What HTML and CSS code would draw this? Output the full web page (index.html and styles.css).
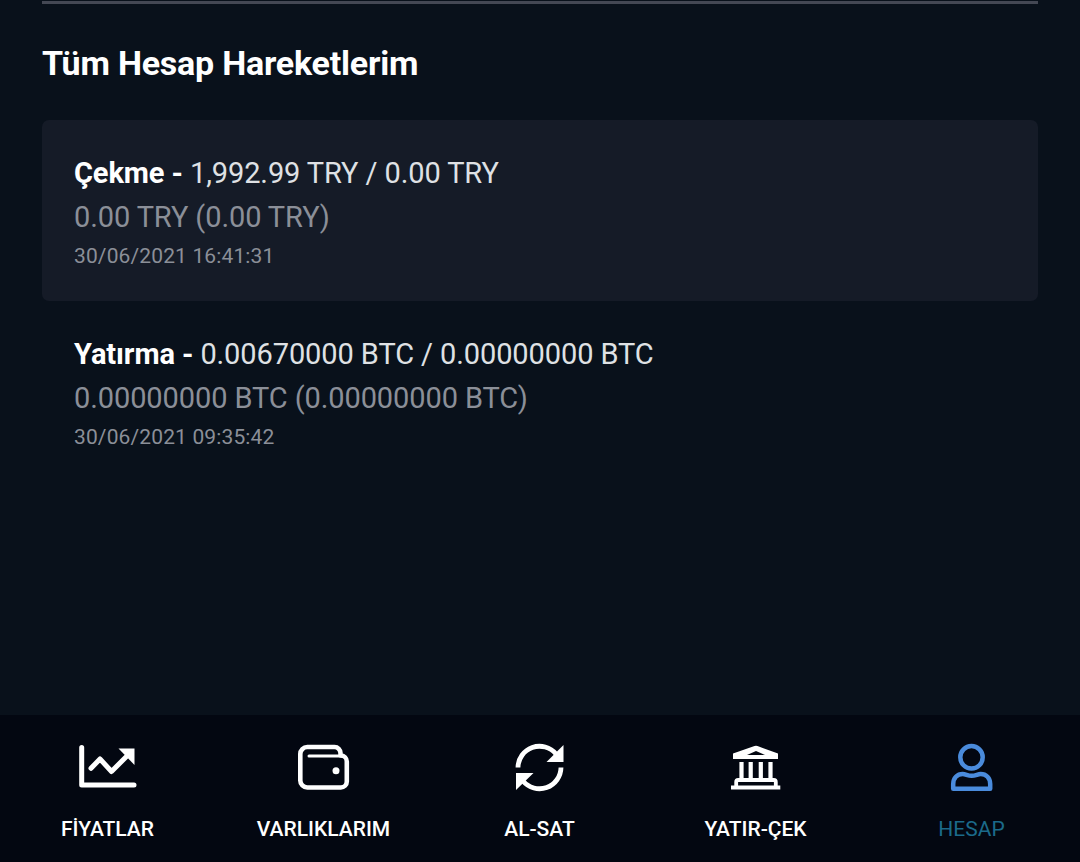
FILE: index.html
```html
<!DOCTYPE html>
<html lang="tr">
<head>
	<meta charset="UTF-8">
	<meta name="viewport" content="width=device-width, initial-scale=1.0">
	<title>Tüm Hesap Hareketlerim</title>
	<link rel="stylesheet" href="styles.css">
</head>
<body>
	<main class="content">
		<h1 class="title">Tüm Hesap Hareketlerim</h1>
		<ul class="list">
			<li class="item item-shaded">
				<p class="amount"><strong>Çekme - </strong>1,992.99 TRY / 0.00 TRY</p>
				<p class="balance">0.00 TRY (0.00 TRY)</p>
				<p class="date">30/06/2021 16:41:31</p>
			</li>
			<li class="item">
				<p class="amount"><strong>Yatırma - </strong>0.00670000 BTC / 0.00000000 BTC</p>
				<p class="balance">0.00000000 BTC (0.00000000 BTC)</p>
				<p class="date">30/06/2021 09:35:42</p>
			</li>
		</ul>
	</main>

	<nav class="tabs">
		<a class="tab">
			<svg class="icon" viewBox="0 0 64 56">
				<path d="M5.7 7.5V45H58" stroke-width="5"/>
				<path d="M15 28.3L24 19L35.5 31.5L50 17" stroke-width="5"/>
				<path class="solid" d="M42.5 8.5H58.5V25Z"/>
			</svg>
			<span>FİYATLAR</span>
		</a>
		<a class="tab">
			<svg class="icon" viewBox="0 0 64 56">
				<path d="M48.5 14.5V13a6 6 0 0 0-6-6H15.3a7 7 0 0 0-7 7V40.5a7 7 0 0 0 7 7H48.8a6 6 0 0 0 6-6V21.5a6 6 0 0 0-6-6" stroke-width="4.6"/>
				<path d="M17 16H50" stroke-width="3"/>
				<circle class="solid" cx="44" cy="30.7" r="3.5"/>
			</svg>
			<span>VARLIKLARIM</span>
		</a>
		<a class="tab">
			<svg class="icon" viewBox="0 0 64 56">
				<path class="flat" d="M10 27.5A21.5 21.5 0 0 1 48 14M53 27.5A21.5 21.5 0 0 1 15 41" stroke-width="4.8"/>
				<path class="solid" d="M55.5 5V22H38.5ZM8 33H25.5L8 50Z"/>
			</svg>
			<span>AL-SAT</span>
		</a>
		<a class="tab">
			<svg class="icon" viewBox="0 0 64 56">
				<path class="solid" fill-rule="evenodd" d="M9 13.5L30.5 6Q32 5.4 33.5 6L54 13.5V19H9ZM23 15H41L32 11Z"/>
				<path class="flat" d="M17.5 22V38M26.7 22V38M36.8 22V38M46.5 22V38" stroke-width="4.2"/>
				<path d="M12.2 46V42a2 2 0 0 1 2-2H49.8a2 2 0 0 1 2 2V46" stroke-width="3.8"/>
				<path class="flat" d="M7 47.5H56.3" stroke-width="4"/>
			</svg>
			<span>YATIR-ÇEK</span>
		</a>
		<a class="tab tab-active">
			<svg class="icon" viewBox="0 0 64 56">
				<circle cx="31.5" cy="17.3" r="11.2" stroke-width="4.5"/>
				<path d="M13.2 48.8V44c0-6 4-10 9.5-10 3 0 5 1.8 9 1.8s6-1.8 9-1.8c5.5 0 9.5 4 9.5 10v4.8z" stroke-width="4.5"/>
			</svg>
			<span>HESAP</span>
		</a>
	</nav>
</body>
</html>
```
FILE: styles.css
```css
* {
	box-sizing: border-box;
}
body {
	display: flex;
	flex-direction: column;
	height: 862px;
	margin: 0;
	padding-top: 1px;
	overflow: hidden;
	background-color: #09111b;
	color: #fff;
	font-family: Roboto, sans-serif;
}
.content {
	flex: 1;
	margin: 0 42px;
	border-top: 3px solid #444854;
}
.title {
	margin: 39px 0 37px;
	font-size: 34px;
	line-height: 40px;
	font-weight: 700;
	letter-spacing: -0.22px;
}
.list {
	margin: 0;
	padding: 0;
	list-style: none;
}
.item {
	height: 181px;
	padding: 31px 32px 0;
	border-radius: 7px;
}
.item-shaded {
	background-color: #151b27;
}
.item p {
	margin: 0;
}
.amount,
.balance {
	font-size: 29px;
	line-height: 44px;
	letter-spacing: -0.1px;
}
.amount {
	color: #dfe1e4;
}
.amount strong {
	color: #fff;
}
.balance {
	color: #8b8f98;
}
.date {
	color: #8b8f98;
	font-size: 21px;
	line-height: 34px;
	letter-spacing: 0.13px;
}
.tabs {
	display: flex;
	height: 147px;
	padding-top: 25px;
	background-color: #030711;
}
.tab {
	flex: 1;
	display: flex;
	flex-direction: column;
	align-items: center;
	gap: 20px;
	font-size: 21px;
	font-weight: 500;
	line-height: 26px;
}
.tab span {
	padding-right: 1px;
}
.tab-active {
	color: #1b6a8a;
	font-weight: 400;
}
.icon {
	width: 64px;
	height: 56px;
	fill: none;
	stroke: #fff;
	stroke-linecap: round;
	stroke-linejoin: round;
}
.icon .flat {
	stroke-linecap: butt;
}
.icon .solid {
	fill: #fff;
	stroke: none;
}
.tab-active .icon {
	stroke: #4a8bdc;
}
```
